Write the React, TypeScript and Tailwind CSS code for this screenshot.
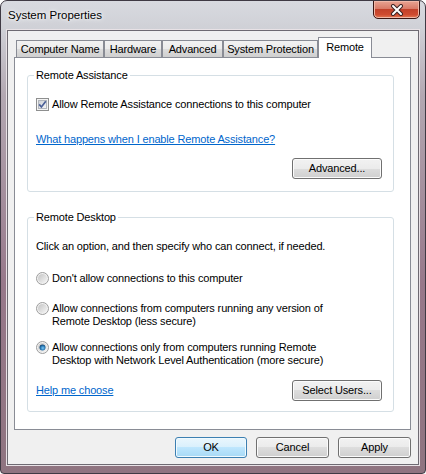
import React from 'react'

const base = "font-['Liberation_Sans',Arial,sans-serif] text-[11px] leading-[13px] tracking-[-0.15px]"
const txt = `${base} text-black`
const link = `${base} text-[#0066cc] underline`

const tabs = [
  { label: 'Computer Name', w: 'w-[88px]' },
  { label: 'Hardware', w: 'w-[58px]' },
  { label: 'Advanced', w: 'w-[61px]' },
  { label: 'System Protection', w: 'w-[95px]' },
]

const Btn: React.FC<{ label: string; w: string; primary?: boolean }> = ({ label, w, primary }) => (
  <button
    className={`h-[21px] ${w} shrink-0 rounded-[3px] border ${txt} flex items-center justify-center ${
      primary
        ? 'border-[#3c7fb1] bg-[linear-gradient(#eaf6fd_0%,#d9f0fc_50%,#bee6fd_50%,#a7d9f5_100%)] shadow-[inset_0_0_0_1px_#f0fafe]'
        : 'border-[#707070] bg-[linear-gradient(#f2f2f2_0%,#ebebeb_50%,#dddddd_50%,#cfcfcf_100%)] shadow-[inset_0_0_0_1px_#fbfbfb]'
    }`}
  >
    {label}
  </button>
)

const Check = () => (
  <svg width="13" height="13" viewBox="0 0 13 13" className="shrink-0">
    <defs>
      <linearGradient id="cbfill" x1="0" y1="0" x2="1" y2="1">
        <stop offset="0" stopColor="#cbcfd5" />
        <stop offset="1" stopColor="#f6f6f6" />
      </linearGradient>
    </defs>
    <rect x="0.5" y="0.5" width="12" height="12" fill="#f4f4f4" stroke="#8e8f8f" />
    <rect x="2.5" y="2.5" width="8" height="8" fill="url(#cbfill)" stroke="#b2b6bc" />
    <path d="M3.2 6.4 L5.4 9 L9.8 3.2" stroke="#4a5f97" strokeWidth="1.7" fill="none" />
  </svg>
)

const Radio: React.FC<{ on?: boolean; id: string }> = ({ on, id }) => (
  <svg width="13" height="13" viewBox="0 0 13 13" className="shrink-0">
    <defs>
      <linearGradient id={`rf${id}`} x1="0" y1="0" x2="1" y2="1">
        <stop offset="0" stopColor="#c4c4c4" />
        <stop offset="1" stopColor="#f6f6f6" />
      </linearGradient>
      <radialGradient id={`rd${id}`} cx="0.55" cy="0.6" r="0.6">
        <stop offset="0" stopColor="#7fcaf4" />
        <stop offset="0.6" stopColor="#2a7ab8" />
        <stop offset="1" stopColor="#0f3f6a" />
      </radialGradient>
    </defs>
    <circle cx="6.5" cy="6.5" r="6" fill="#f2f2f2" stroke="#9c9c9c" />
    <circle cx="6.5" cy="6.5" r="4.5" fill={`url(#rf${id})`} />
    {on && <circle cx="6.5" cy="6.5" r="3" fill={`url(#rd${id})`} />}
  </svg>
)

const Group: React.FC<{ title: string; h: string; mt: string; children: React.ReactNode }> = ({ title, h, mt, children }) => (
  <div className={`relative ${mt} ml-[12px] w-[367px] ${h} shrink-0 rounded-[3px] border border-[#d5dfe5] pl-[8px] pr-[11px] flex flex-col`}>
    <span className={`absolute -top-[7px] left-[6px] bg-white px-[2px] ${txt}`}>{title}</span>
    {children}
  </div>
)

export default function App() {
  return (
    <div className="w-[426px] h-[474px] rounded-t-[7px] rounded-b-[4px] border border-[#3f3a44] bg-[linear-gradient(#d8dae0_0%,#cfd0d6_6%,#b3a8b2_20%,#97788a_60%,#8f7480_100%)] flex flex-col overflow-hidden">
      <div className="h-[29px] shrink-0 flex items-start justify-between pl-[7px] pr-[5px]">
        <span className="mt-[7px] font-['Liberation_Sans',Arial,sans-serif] text-[11.5px] leading-[14px] text-black [text-shadow:0_0_6px_#ffffff,0_0_3px_#ffffff]">
          System Properties
        </span>
        <div className="w-[47px] h-[19px] -mt-px rounded-b-[5px] border border-[#3b1714] bg-[linear-gradient(#e8a493_0%,#d97b68_45%,#c2412a_50%,#cf4b30_80%,#e27a55_100%)] shadow-[inset_0_0_0_1px_#f0b8a8] flex items-center justify-center">
          <svg width="14" height="12" viewBox="0 0 14 12">
            <path d="M3 2 L11 10 M11 2 L3 10" stroke="#3a2424" strokeWidth="4" strokeLinecap="round" />
            <path d="M3 2 L11 10 M11 2 L3 10" stroke="#ffffff" strokeWidth="2" strokeLinecap="round" />
          </svg>
        </div>
      </div>

      <div className="ml-[6px] mr-[6px] h-[435px] shrink-0 border border-[#6e6a72] bg-[#f0f0f0] pl-[6px] pr-[7px] pt-[6px] flex flex-col shadow-[0_0_0_1px_#e8e2e6]">
        <div className="h-[20px] pl-[2px] flex items-end">
          {tabs.map(t => (
            <div
              key={t.label}
              className={`${t.w} h-[17px] shrink-0 border-t border-x border-[#898c95] bg-[linear-gradient(#f2f2f2_0%,#ebebeb_50%,#dddddd_50%,#cfcfcf_100%)] ${txt} flex items-center justify-center`}
            >
              {t.label}
            </div>
          ))}
          <div className={`w-[54px] h-[21px] -mb-px relative z-10 shrink-0 border-t border-x border-[#898c95] bg-white ${txt} flex items-center justify-center pb-[1px]`}>
            Remote
          </div>
        </div>

        <div className="w-[397px] h-[373px] shrink-0 border border-[#898c95] bg-white flex flex-col">
          <Group title="Remote Assistance" h="h-[117px]" mt="mt-[17px]">
            <div className="mt-[22px] flex items-center gap-[3px]">
              <Check />
              <span className={txt}>Allow Remote Assistance connections to this computer</span>
            </div>
            <a className={`mt-[22px] ${link} self-start`}>What happens when I enable Remote Assistance?</a>
            <div className="mt-[12px] flex justify-end">
              <Btn label="Advanced..." w="w-[90px]" />
            </div>
          </Group>

          <Group title="Remote Desktop" h="h-[195px]" mt="mt-[25px]">
            <span className={`mt-[22px] ${txt}`}>Click an option, and then specify who can connect, if needed.</span>
            <div className="mt-[19px] flex items-start gap-[3px]">
              <Radio id="a" />
              <span className={txt}>Don't allow connections to this computer</span>
            </div>
            <div className="mt-[17px] flex items-start gap-[3px]">
              <Radio id="b" />
              <span className={txt}>
                Allow connections from computers running any version of
                <br />
                Remote Desktop (less secure)
              </span>
            </div>
            <div className="mt-[13px] flex items-start gap-[3px]">
              <Radio id="c" on />
              <span className={txt}>
                Allow connections only from computers running Remote
                <br />
                Desktop with Network Level Authentication (more secure)
              </span>
            </div>
            <div className="mt-[13px] flex items-center justify-between">
              <a className={link}>Help me choose</a>
              <Btn label="Select Users..." w="w-[90px]" />
            </div>
          </Group>
        </div>

        <div className="mt-[7px] flex justify-end gap-[9px]">
          <Btn label="OK" w="w-[72px]" primary />
          <Btn label="Cancel" w="w-[73px]" />
          <Btn label="Apply" w="w-[73px]" />
        </div>
      </div>
    </div>
  )
}
